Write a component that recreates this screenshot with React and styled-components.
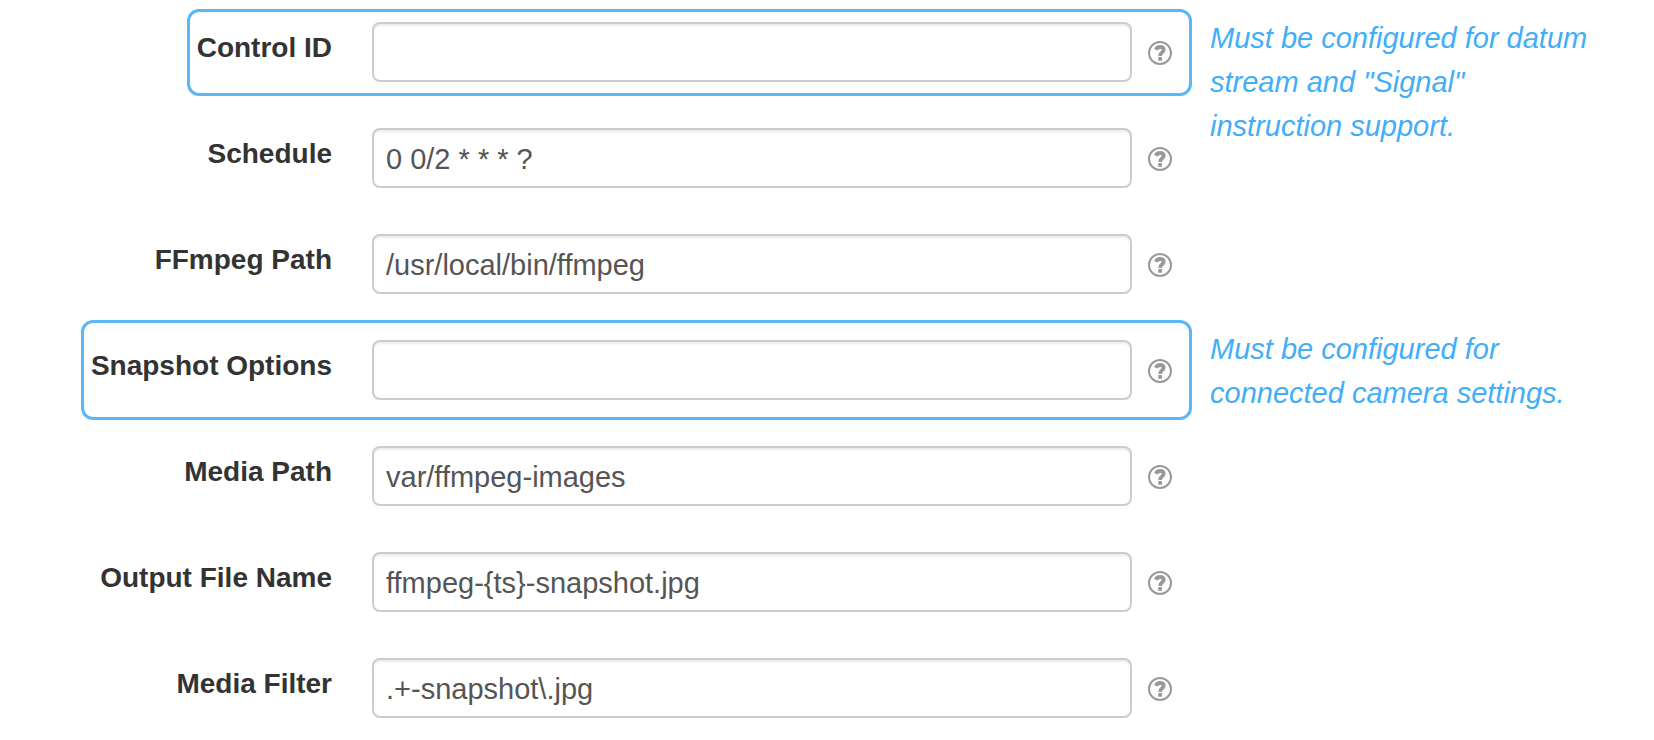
import React, { useState } from "react";
import styled, { createGlobalStyle, css } from "styled-components";

const GlobalStyle = createGlobalStyle`
  *, *::before, *::after { box-sizing: border-box; }
  body {
    margin: 0;
    background: #fff;
    color: #333;
    font-family: "Liberation Sans", Arial, sans-serif;
    font-size: 28px;
  }
`;

const Form = styled.form`
  display: grid;
  grid-template-columns: minmax(0, 1fr) 386px;
  gap: 6px 18px;
  padding: 9px 58px 2px 0;
`;

const Field = styled.div`
  grid-column: 1;
  justify-self: end;
  display: flex;
  align-items: flex-start;
  padding: 17px 17px 17px 7px;
  border: 3px solid transparent;
  border-radius: 12px;

  ${({ $highlighted }) => $highlighted && css`border-color: #5ab7f8;`}
  ${({ $compact }) => $compact && css`
    padding-top: 10px;
    padding-bottom: 11px;
    margin-bottom: 6px;
  `}
`;

const Label = styled.label`
  margin-right: 40px;
  padding-top: 6px;
  font-weight: 700;
  line-height: 40px;
  white-space: nowrap;
`;

const TextInput = styled.input`
  width: clamp(240px, 46vw, 760px);
  height: 60px;
  padding: 2px 12px 0;
  border: 2px solid #ccc;
  border-radius: 8px;
  background: #fff;
  box-shadow: inset 0 2px 2px rgba(0, 0, 0, 0.075);
  color: #555;
  font-family: inherit;
  font-size: 29px;

  &:focus {
    outline: none;
    border-color: #5ab7f8;
  }
`;

const HelpButton = styled.button`
  display: flex;
  margin: 19px 0 0 16px;
  padding: 0;
  border: 0;
  background: none;
  color: #999;
  cursor: pointer;
`;

const Note = styled.p`
  grid-column: 2;
  grid-row: ${({ $row }) => $row} / span 2;
  margin: 7px 0 0;
  color: #42aef7;
  font-size: 29px;
  font-style: italic;
  line-height: 44px;
`;

const HelpIcon = () => (
  <svg width="24" height="24" viewBox="0 0 24 24" fill="none" stroke="currentColor" aria-hidden="true">
    <circle cx="12" cy="12" r="11" strokeWidth="2" />
    <path
      strokeWidth="3.8"
      d="M7.8 8.7C8.6 6.8 10 6 12.1 6C14.5 6 15.7 7.1 15.7 8.8C15.7 11.4 12.1 11 12.1 14.9"
    />
    <rect x="10.2" y="16" width="3.8" height="3.8" rx="0.4" fill="currentColor" stroke="none" />
  </svg>
);

const fields = [
  {
    id: "control-id",
    label: "Control ID",
    value: "",
    compact: true,
    note: 'Must be configured for datum stream and "Signal" instruction support.',
  },
  { id: "schedule", label: "Schedule", value: "0 0/2 * * * ?" },
  { id: "ffmpeg-path", label: "FFmpeg Path", value: "/usr/local/bin/ffmpeg" },
  {
    id: "snapshot-options",
    label: "Snapshot Options",
    value: "",
    note: "Must be configured for connected camera settings.",
  },
  { id: "media-path", label: "Media Path", value: "var/ffmpeg-images" },
  { id: "output-file-name", label: "Output File Name", value: "ffmpeg-{ts}-snapshot.jpg" },
  { id: "media-filter", label: "Media Filter", value: ".+-snapshot\\.jpg" },
];

export default function App() {
  const [values, setValues] = useState(() =>
    Object.fromEntries(fields.map((f) => [f.id, f.value]))
  );

  return (
    <>
      <GlobalStyle />
      <Form onSubmit={(e) => e.preventDefault()}>
        {fields.map((f, i) => (
          <React.Fragment key={f.id}>
            <Field $highlighted={Boolean(f.note)} $compact={f.compact}>
              <Label htmlFor={f.id}>{f.label}</Label>
              <TextInput
                id={f.id}
                type="text"
                spellCheck={false}
                value={values[f.id]}
                onChange={(e) => setValues({ ...values, [f.id]: e.target.value })}
              />
              <HelpButton type="button" aria-label={`Help for ${f.label}`}>
                <HelpIcon />
              </HelpButton>
            </Field>
            {f.note && <Note $row={i + 1}>{f.note}</Note>}
          </React.Fragment>
        ))}
      </Form>
    </>
  );
}
